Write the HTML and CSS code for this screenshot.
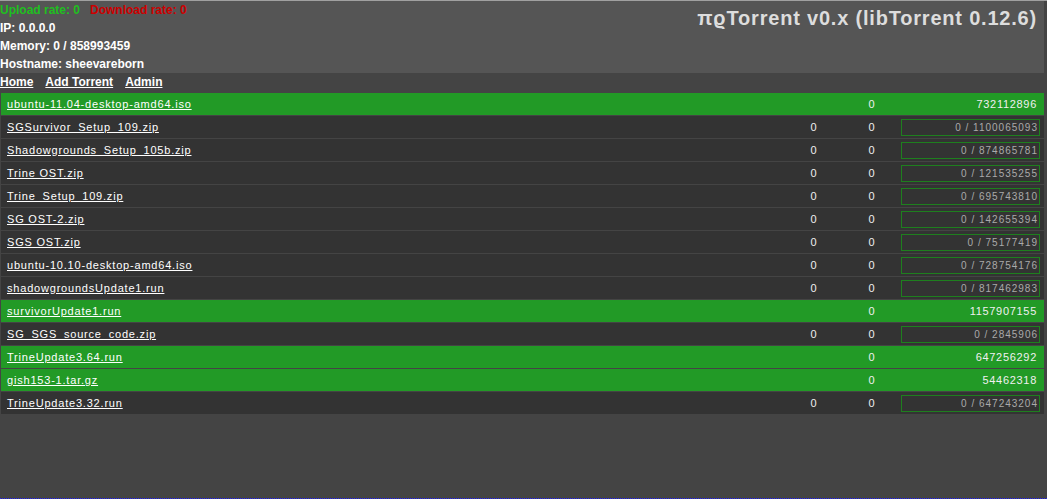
FILE: index.html
```html
<!DOCTYPE html>
<html>
<head>
<meta charset="utf-8">
<link rel="stylesheet" href="styles.css">
</head>
<body>
<div class="page">
  <div class="header">
    <div class="info">
      <div class="line"><span class="up">Upload rate: 0</span><span class="down">Download rate: 0</span></div>
      <div class="line">IP: 0.0.0.0</div>
      <div class="line">Memory: 0 / 858993459</div>
      <div class="line">Hostname: sheevareborn</div>
    </div>
    <div class="title">πϱTorrent v0.x (libTorrent 0.12.6)</div>
  </div>
  <div class="nav">
    <a href="#">Home</a>
    <a href="#">Add Torrent</a>
    <a href="#">Admin</a>
  </div>
  <table class="list">
    <tr class="done"><td class="name"><a href="#">ubuntu-11.04-desktop-amd64.iso</a></td><td class="num"></td><td class="num">0</td><td class="prog">732112896</td></tr>
    <tr><td class="name"><a href="#">SGSurvivor_Setup_109.zip</a></td><td class="num">0</td><td class="num">0</td><td class="prog"><div class="box">0 / 1100065093</div></td></tr>
    <tr><td class="name"><a href="#">Shadowgrounds_Setup_105b.zip</a></td><td class="num">0</td><td class="num">0</td><td class="prog"><div class="box">0 / 874865781</div></td></tr>
    <tr><td class="name"><a href="#">Trine OST.zip</a></td><td class="num">0</td><td class="num">0</td><td class="prog"><div class="box">0 / 121535255</div></td></tr>
    <tr><td class="name"><a href="#">Trine_Setup_109.zip</a></td><td class="num">0</td><td class="num">0</td><td class="prog"><div class="box">0 / 695743810</div></td></tr>
    <tr><td class="name"><a href="#">SG OST-2.zip</a></td><td class="num">0</td><td class="num">0</td><td class="prog"><div class="box">0 / 142655394</div></td></tr>
    <tr><td class="name"><a href="#">SGS OST.zip</a></td><td class="num">0</td><td class="num">0</td><td class="prog"><div class="box">0 / 75177419</div></td></tr>
    <tr><td class="name"><a href="#">ubuntu-10.10-desktop-amd64.iso</a></td><td class="num">0</td><td class="num">0</td><td class="prog"><div class="box">0 / 728754176</div></td></tr>
    <tr><td class="name"><a href="#">shadowgroundsUpdate1.run</a></td><td class="num">0</td><td class="num">0</td><td class="prog"><div class="box">0 / 817462983</div></td></tr>
    <tr class="done"><td class="name"><a href="#">survivorUpdate1.run</a></td><td class="num"></td><td class="num">0</td><td class="prog">1157907155</td></tr>
    <tr><td class="name"><a href="#">SG_SGS_source_code.zip</a></td><td class="num">0</td><td class="num">0</td><td class="prog"><div class="box">0 / 2845906</div></td></tr>
    <tr class="done"><td class="name"><a href="#">TrineUpdate3.64.run</a></td><td class="num"></td><td class="num">0</td><td class="prog">647256292</td></tr>
    <tr class="done"><td class="name"><a href="#">gish153-1.tar.gz</a></td><td class="num"></td><td class="num">0</td><td class="prog">54462318</td></tr>
    <tr><td class="name"><a href="#">TrineUpdate3.32.run</a></td><td class="num">0</td><td class="num">0</td><td class="prog"><div class="box">0 / 647243204</div></td></tr>
  </table>
</div>
</body>
</html>
```
FILE: styles.css
```css
html, body {
  margin: 0;
  padding: 0;
  background: #444444;
}
.page {
  min-height: 100vh;
  box-sizing: border-box;
  border-top: 1px solid #a0a0a0;
  border-bottom: 1px dotted #2020ff;
  font-family: "Liberation Sans", Arial, sans-serif;
  color: #ffffff;
}
.header {
  display: flex;
  justify-content: space-between;
  align-items: flex-start;
  background: #555555;
  width: 1044px;
  height: 72px;
}
.info {
  font-size: 12px;
  font-weight: bold;
}
.line {
  height: 18px;
  line-height: 18px;
}
.up {
  color: #1fbf1f;
  margin-right: 10px;
}
.down {
  color: #cc0000;
}
.title {
  font-size: 20px;
  font-weight: bold;
  color: #dddddd;
  letter-spacing: 0.8px;
  padding: 5px 7px 0 0;
  line-height: 24px;
}
.nav {
  display: flex;
  gap: 12px;
  height: 19px;
  line-height: 18px;
  font-size: 12px;
  font-weight: bold;
}
.nav a {
  color: #ffffff;
  text-decoration: underline;
}
.list {
  border-collapse: separate;
  border-spacing: 0 1px;
  margin-left: 1px;
  width: 1043px;
  table-layout: auto;
  font-size: 11px;
  letter-spacing: 0.8px;
}
.list td {
  box-sizing: border-box;
  height: 22px;
  padding: 0;
  background: #333333;
  color: #f0f0f0;
}
.list tr.done td {
  background: #229a26;
}
.list td.name {
  padding-left: 6px;
}
.name a {
  color: #ffffff;
  text-decoration: underline;
}
.list td.num {
  width: 58px;
  text-align: center;
}
.list td.prog {
  width: 143px;
  text-align: right;
  padding-right: 7px;
  letter-spacing: 0.7px;
}
.list tr:not(.done) td.prog {
  padding-right: 4px;
}
.box {
  box-sizing: border-box;
  width: 139px;
  height: 17px;
  margin-left: auto;
  border: 1px solid #1e7f1e;
  color: #aaaaaa;
  font-size: 10px;
  letter-spacing: 1px;
  line-height: 15px;
  padding-right: 1px;
  text-align: right;
}
```
